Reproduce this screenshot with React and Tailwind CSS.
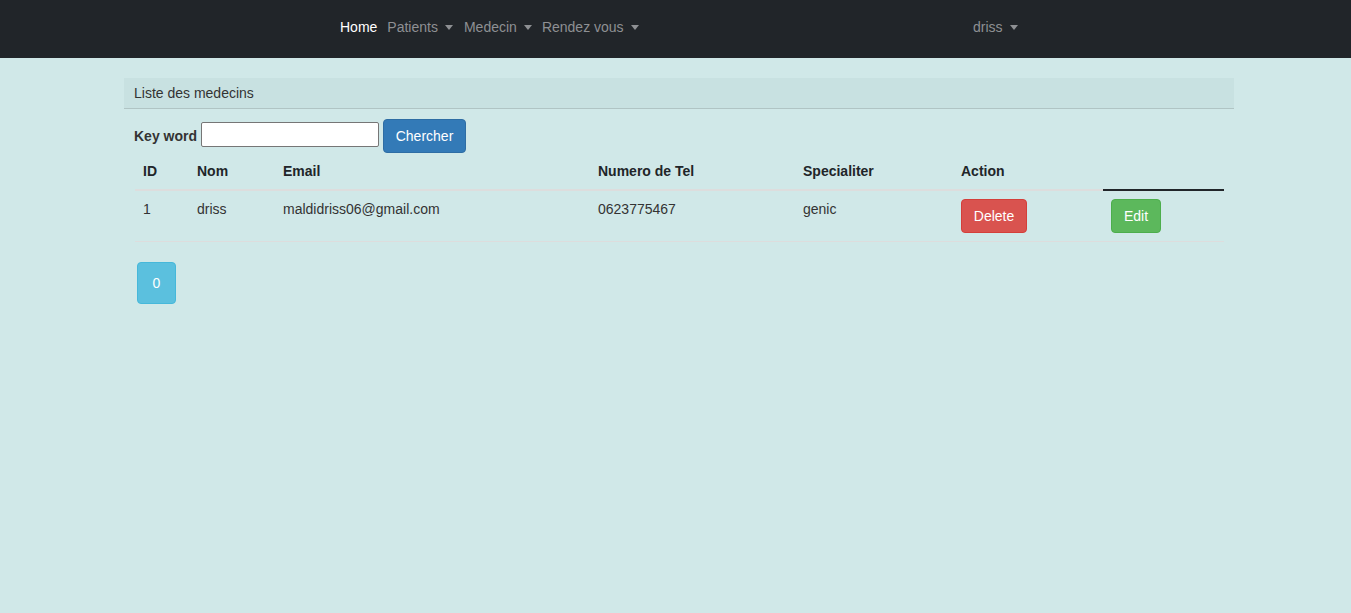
import React from 'react';

const Caret = () => (
    <span className="inline-block ml-[7px] mt-[1px] w-0 h-0 border-t-[5px] border-t-[#8e9093] border-x-[4px] border-x-transparent" />
);

const medecins = [
    { id: 1, nom: 'driss', email: 'maldidriss06@gmail.com', tel: '0623775467', specialite: 'genic' },
];

const App = () => {
    return (
        <div className="min-h-screen bg-[#d0e8e8] text-[14px] leading-5 text-[#333]" style={{ fontFamily: '"Liberation Sans", Arial, sans-serif' }}>
            <nav className="h-[58px] pb-[4px] bg-[#212529] flex items-center">
                <div className="flex items-center ml-[340px] w-[633px]">
                    <a className="text-white">Home</a>
                    <a className="ml-[10px] flex items-center text-[#8e9093]">Patients<Caret /></a>
                    <a className="ml-[11px] flex items-center text-[#8e9093]">Medecin<Caret /></a>
                    <a className="ml-[10px] flex items-center text-[#8e9093]">Rendez vous<Caret /></a>
                </div>
                <a className="flex items-center text-[#8e9093]">driss<Caret /></a>
            </nav>

            <div className="mx-[124px] w-[1110px] mt-[20px]">
                <div className="h-[31px] px-[10px] flex items-center bg-[#c8e1e1] border-b border-[#b0c4c4] text-[#333]">
                    Liste des medecins
                </div>

                <div className="px-[10px]">
                    <form className="mt-[10px] flex items-center" onSubmit={e => e.preventDefault()}>
                        <label className="font-bold text-[#333] -mt-[1px]">Key word</label>
                        <input type="text" className="ml-[4px] self-start mt-[3px] w-[178px] h-[25px] bg-white border border-[#767676] rounded-[2px] px-1 outline-none" />
                        <button className="ml-[4px] w-[83px] h-[34px] bg-[#337ab7] border border-[#2e6da4] rounded-[4px] text-white">Chercher</button>
                    </form>

                    <table className="mt-[1px] ml-[1px] w-[1089px] table-fixed border-collapse">
                        <colgroup>
                            <col className="w-[54px]" />
                            <col className="w-[86px]" />
                            <col className="w-[315px]" />
                            <col className="w-[205px]" />
                            <col className="w-[158px]" />
                            <col className="w-[150px]" />
                            <col className="w-[121px]" />
                        </colgroup>
                        <thead>
                            <tr className="text-left text-[#212529]">
                                <th className="px-[8px] pt-[7px] pb-[8px] font-bold border-b-2 border-[#dddddd]">ID</th>
                                <th className="px-[8px] pt-[7px] pb-[8px] font-bold border-b-2 border-[#dddddd]">Nom</th>
                                <th className="px-[8px] pt-[7px] pb-[8px] font-bold border-b-2 border-[#dddddd]">Email</th>
                                <th className="px-[8px] pt-[7px] pb-[8px] font-bold border-b-2 border-[#dddddd]">Numero de Tel</th>
                                <th className="px-[8px] pt-[7px] pb-[8px] font-bold border-b-2 border-[#dddddd]">Specialiter</th>
                                <th className="px-[8px] pt-[7px] pb-[8px] font-bold border-b-2 border-[#dddddd]">Action</th>
                                <th className="px-[8px] pt-[7px] pb-[8px] border-b-2 border-[#212529]"></th>
                            </tr>
                        </thead>
                        <tbody>
                            {medecins.map(m => (
                                <tr key={m.id} className="align-top text-[#333]">
                                    <td className="px-[8px] pt-[8px] pb-[8px] border-b border-[#dddddd]">{m.id}</td>
                                    <td className="px-[8px] pt-[8px] pb-[8px] border-b border-[#dddddd]">{m.nom}</td>
                                    <td className="px-[8px] pt-[8px] pb-[8px] border-b border-[#dddddd]">{m.email}</td>
                                    <td className="px-[8px] pt-[8px] pb-[8px] border-b border-[#dddddd]">{m.tel}</td>
                                    <td className="px-[8px] pt-[8px] pb-[8px] border-b border-[#dddddd]">{m.specialite}</td>
                                    <td className="px-[8px] pt-[8px] pb-[8px] border-b border-[#dddddd]">
                                        <button className="w-[66px] h-[34px] bg-[#d9534f] border border-[#d43f3a] rounded-[4px] text-white">Delete</button>
                                    </td>
                                    <td className="px-[8px] pt-[8px] pb-[8px] border-b border-[#dddddd]">
                                        <button className="w-[50px] h-[34px] bg-[#5cb85c] border border-[#4cae4c] rounded-[4px] text-white">Edit</button>
                                    </td>
                                </tr>
                            ))}
                        </tbody>
                    </table>

                    <div className="mt-[20px] ml-[3px]">
                        <button className="w-[39px] h-[42px] bg-[#5bc0de] border border-[#46b8da] rounded-[4px] text-white">0</button>
                    </div>
                </div>
            </div>
        </div>
    );
};

export default App;
